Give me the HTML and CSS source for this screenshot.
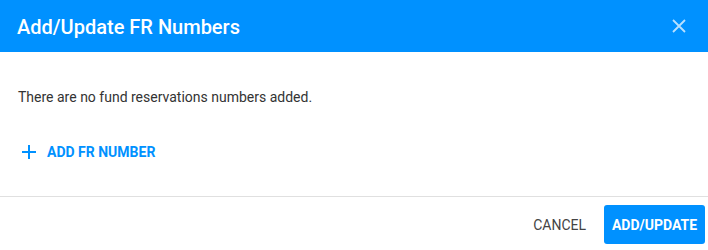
FILE: index.html
```html
<!DOCTYPE html>
<html>
<head>
<meta charset="utf-8">
<link rel="stylesheet" href="styles.css">
</head>
<body>
<div class="dialog">
  <header class="dialog-header">
    <h1 class="dialog-title">Add/Update FR Numbers</h1>
    <button class="close-btn" aria-label="Close">
      <svg width="14" height="14" viewBox="0 0 14 14"><path d="M1 1L13 13M13 1L1 13" stroke="currentColor" stroke-width="1.8" fill="none"/></svg>
    </button>
  </header>
  <main class="dialog-body">
    <p class="empty-text">There are no fund reservations numbers added.</p>
    <button class="add-link">
      <svg width="14" height="14" viewBox="0 0 14 14"><path d="M7 0V14M0 7H14" stroke="currentColor" stroke-width="2" fill="none"/></svg>
      <span>ADD FR NUMBER</span>
    </button>
  </main>
  <footer class="dialog-footer">
    <button class="btn-cancel">CANCEL</button>
    <button class="btn-primary">ADD/UPDATE</button>
  </footer>
</div>
</body>
</html>
```

FILE: styles.css
```css
* { box-sizing: border-box; }
html, body { margin: 0; padding: 0; background: #fff; }
body { font-family: Roboto, "Noto Sans", "Liberation Sans", sans-serif; color: #333; }
.dialog { width: 708px; height: 250px; display: flex; flex-direction: column; }
.dialog-header {
  flex: 0 0 52px;
  background: #0091ff;
  display: flex;
  align-items: center;
  justify-content: space-between;
  padding: 0 22px 0 17px;
}
.dialog-title {
  margin: 0;
  font-size: 20px;
  font-weight: 500;
  color: #fff;
  line-height: 1;
  padding-top: 1px;
}
.close-btn {
  background: none;
  border: 0;
  padding: 0;
  color: rgba(255,255,255,0.72);
  display: flex;
  width: 14px;
  height: 14px;
}
.dialog-body {
  flex: 0 0 145px;
  border-bottom: 1px solid #e0e0e0;
  padding: 37px 18px 0;
}
.empty-text {
  margin: 0;
  font-size: 14px;
  line-height: 16px;
  color: #333;
}
.add-link {
  margin-top: 39px;
  background: none;
  border: 0;
  padding: 0 0 0 4px;
  display: flex;
  align-items: center;
  gap: 11px;
  color: #0091ff;
  font-family: inherit;
  font-size: 14px;
  font-weight: 700;
  line-height: 16px;
}
.dialog-footer {
  flex: 1;
  display: flex;
  align-items: flex-start;
  justify-content: flex-end;
  padding: 8px 3px 0 0;
  gap: 18px;
}
.btn-cancel {
  background: none;
  border: 0;
  padding: 0;
  height: 39px;
  font-family: inherit;
  font-size: 14px;
  color: #444;
}
.btn-primary {
  height: 39px;
  width: 101px;
  border: 0;
  border-radius: 3px;
  background: #0091ff;
  color: #fff;
  font-family: inherit;
  font-size: 14px;
  font-weight: 700;
  padding: 0;
}
```
